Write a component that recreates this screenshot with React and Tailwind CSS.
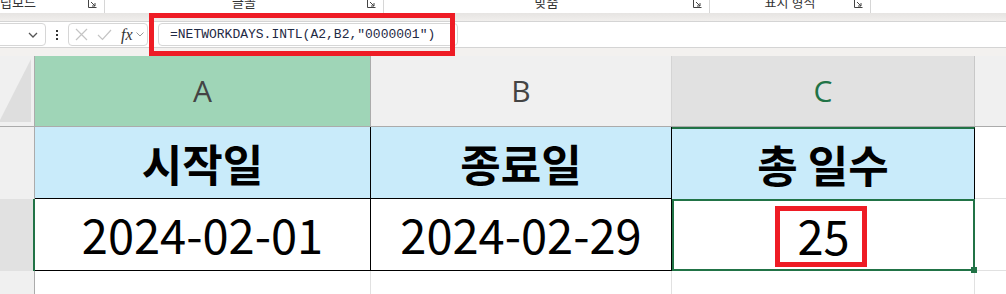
import React from 'react';

const KR = { fontFamily: '"Noto Sans CJK KR", "Noto Sans", sans-serif' };

function Launcher() {
  return (
    <svg width="9" height="9" viewBox="0 0 9 9" className="text-[#444]">
      <path d="M0.5 0.5 V8.5 H8.5" fill="none" stroke="currentColor" strokeWidth="1" />
      <path d="M3 3 L7 7 M4 7 H7 V4" fill="none" stroke="currentColor" strokeWidth="1" />
    </svg>
  );
}

function Ribbon() {
  const groups = [
    { label: '클립보드', w: 105, pr: 70 },
    { label: '글꼴', w: 279 },
    { label: '맞춤', w: 326 },
    { label: '표시 형식', w: 161 },
  ];
  return (
    <div className="flex h-[13px] overflow-hidden bg-white text-[13px] text-[#333]" style={KR}>
      {groups.map((g, i) => (
        <div key={i} className="relative flex shrink-0 border-r border-[#d6d6d6]" style={{ width: g.w }}>
          <div className="-mt-[7px] flex-1 whitespace-nowrap text-center leading-[18px]" style={g.pr ? { paddingRight: g.pr, marginLeft: -12 } : null}>
            {g.label}
          </div>
          <div className="absolute -top-[1px] right-[7px]">
            <Launcher />
          </div>
        </div>
      ))}
      <div className="flex-1" />
    </div>
  );
}

function FormulaBar() {
  return (
    <div className="flex h-[27px] items-center border-y border-[#d4d4d4] bg-white">
      <div className="ml-[-6px] flex h-[23px] w-[52px] items-center justify-end rounded-[4px] border border-[#d6d6d6] pr-[7px]">
        <svg width="10" height="6" viewBox="0 0 10 6">
          <path d="M1 1 L5 5 L9 1" fill="none" stroke="#555" strokeWidth="1.3" />
        </svg>
      </div>
      <div className="flex w-[22px] flex-col items-center gap-[2px]">
        <div className="h-[2px] w-[2px] bg-[#333]" />
        <div className="h-[2px] w-[2px] bg-[#333]" />
        <div className="h-[2px] w-[2px] bg-[#333]" />
      </div>
      <div className="flex h-[23px] w-[80px] items-center rounded-[4px] border border-[#d6d6d6] pl-[6px]">
        <svg width="13" height="13" viewBox="0 0 13 13">
          <path d="M1 1 L12 12 M12 1 L1 12" stroke="#c4c4c4" strokeWidth="1.2" />
        </svg>
        <svg width="15" height="12" viewBox="0 0 15 12" className="ml-[9px]">
          <path d="M1 6 L5.5 10.5 L14 1" fill="none" stroke="#c4c4c4" strokeWidth="1.2" />
        </svg>
        <span className="ml-[9px] text-[16px] italic leading-none text-[#333]" style={{ fontFamily: '"Liberation Serif", serif' }}>
          fx
        </span>
        <svg width="8" height="5" viewBox="0 0 8 5" className="ml-[3px]">
          <path d="M0.5 0.5 L4 4 L7.5 0.5" fill="none" stroke="#999" strokeWidth="1" />
        </svg>
      </div>
      <div className="ml-[10px] flex h-[23px] w-[300px] items-center rounded-[4px] border border-[#d6d6d6] pl-[11px]">
        <span className="text-[13px] text-[#1f2a44]" style={{ fontFamily: '"Liberation Mono", monospace' }}>
          =NETWORKDAYS.INTL(A2,B2,"0000001")
        </span>
      </div>
    </div>
  );
}

function Sheet() {
  const hdr = 'flex items-center justify-center text-[30px] leading-none';
  const os = { fontFamily: '"Open Sans", sans-serif' };
  return (
    <div className="flex flex-col" style={KR}>
      <div className="flex h-[71px] border-b border-[#ababab]">
        <div className="relative w-[35px] shrink-0 overflow-hidden border-r border-[#ababab] bg-[#f0f0f0]">
          <div className="absolute bottom-[4px] right-[3px] h-0 w-0 border-b-[63px] border-l-[32px] border-b-[#dedede] border-l-transparent" />
        </div>
        <div className={`${hdr} w-[336px] shrink-0 border-r border-[#ababab] bg-[#9fd5b7] text-[#444]`} style={os}>A</div>
        <div className={`${hdr} w-[301px] shrink-0 border-r border-[#d4d4d4] bg-[#f0f0f0] text-[#444]`} style={os}>B</div>
        <div className={`${hdr} w-[303px] shrink-0 border-r border-[#c8c8c8] bg-[#e1e1e1] text-[#217346]`} style={os}>C</div>
        <div className="flex-1 bg-[#f0f0f0]" />
      </div>

      <div className="flex h-[72px]">
        <div className="w-[35px] shrink-0 border-r border-[#ababab] bg-[#f0f0f0]" />
        <div className="flex w-[336px] shrink-0 items-center justify-center border-r border-b border-black bg-[#c9ebfa] text-[44px] font-bold">시작일</div>
        <div className="flex w-[301px] shrink-0 items-center justify-center border-r border-b border-black bg-[#c9ebfa] text-[44px] font-bold">종료일</div>
        <div className="flex w-[303px] shrink-0 items-center justify-center border-r border-t-2 border-black border-t-[#217346] bg-[#c9ebfa] text-[44px] font-bold">총 일수</div>
        <div className="flex-1 border-b border-[#e1e1e1] bg-white" />
      </div>

      <div className="flex h-[72px]">
        <div className="w-[35px] shrink-0 border-r-2 border-[#217346] bg-[#e1e1e1]" />
        <div className="flex w-[336px] shrink-0 items-center justify-center border-r border-b border-black bg-white text-[47px]">2024-02-01</div>
        <div className="flex w-[301px] shrink-0 items-center justify-center border-r border-b border-black bg-white text-[47px]">2024-02-29</div>
        <div className="relative flex w-[303px] shrink-0 items-center justify-center border-2 border-[#217346] bg-white text-[47px]">
          25
          <div className="absolute -bottom-[4px] -right-[4px] h-[6px] w-[6px] bg-[#217346]" />
        </div>
        <div className="flex-1 border-b border-[#e1e1e1] bg-white" />
      </div>

      <div className="flex h-[23px]">
        <div className="w-[35px] shrink-0 border-r border-[#ababab] bg-[#f0f0f0]" />
        <div className="w-[336px] shrink-0 border-r border-[#e1e1e1] bg-white" />
        <div className="w-[301px] shrink-0 border-r border-[#e1e1e1] bg-white" />
        <div className="w-[303px] shrink-0 border-r border-[#e1e1e1] bg-white" />
        <div className="flex-1 bg-white" />
      </div>
    </div>
  );
}

export default function App() {
  return (
    <div className="relative h-[294px] w-[1006px] overflow-hidden bg-white text-black">
      <Ribbon />
      <div className="h-[8px] bg-gradient-to-b from-[#e6e4e2] to-[#f1efed]" />
      <FormulaBar />
      <div className="h-[8px] bg-[#f3f1ef]" />
      <Sheet />

      {/* red highlight boxes */}
      <div className="absolute left-[149px] top-[13px] h-[43px] w-[306px] border-[5px] border-[#ee1c25]" />
      <div className="absolute left-[775px] top-[206px] h-[61px] w-[92px] border-[5px] border-[#ee1c25]" />
    </div>
  );
}
